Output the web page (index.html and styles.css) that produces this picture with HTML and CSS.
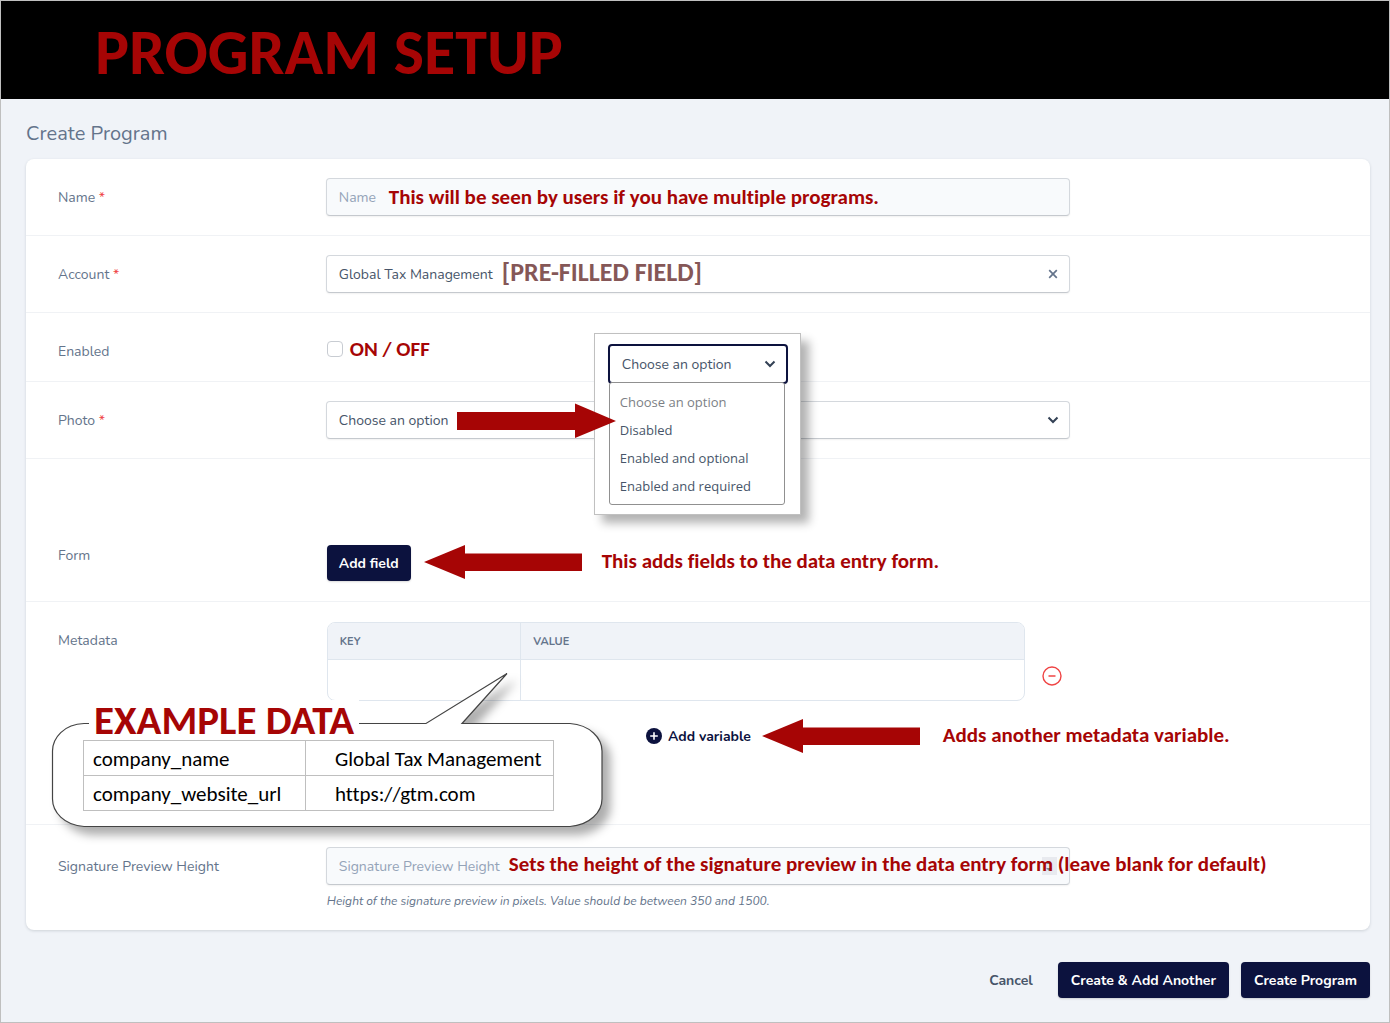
FILE: index.html
```html
<!DOCTYPE html>
<html lang="en">
<head>
<meta charset="utf-8">
<title>Program Setup</title>
<link rel="stylesheet" href="styles.css">
</head>
<body>
<div class="page">
  <header class="banner"><h1>PROGRAM SETUP</h1></header>
  <main class="content">
    <h2 class="title">Create Program</h2>
    <form>
      <div class="card">
        <div class="row">
          <label class="label" for="name">Name <span class="req">*</span></label>
          <div class="field">
            <input class="control filled" id="name" type="text" placeholder="Name">
            <p class="note note-name">This will be seen by users if you have multiple programs.</p>
          </div>
        </div>
        <div class="row">
          <label class="label" for="account">Account <span class="req">*</span></label>
          <div class="field">
            <input class="control" id="account" type="text" value="Global Tax Management">
            <button class="clear" type="button" aria-label="Clear account">
              <svg width="10" height="10" viewBox="0 0 10 10"><path d="M1.200 1.200l7.600 7.600M8.800 1.200l-7.600 7.600" fill="none" stroke="#64748b" stroke-width="1.700"/></svg>
            </button>
            <p class="note prefilled">[PRE-FILLED FIELD]</p>
          </div>
        </div>
        <div class="row">
          <label class="label" for="enabled">Enabled</label>
          <div class="field check-field">
            <input class="check" id="enabled" type="checkbox">
            <span class="note">ON / OFF</span>
          </div>
        </div>
        <div class="row">
          <label class="label" for="photo">Photo <span class="req">*</span></label>
          <div class="field">
            <select class="control" id="photo"><option>Choose an option</option></select>
            <svg class="chevron" width="12" height="8" viewBox="0 0 12 8"><path d="M1.500 1.500L6 6l4.500-4.500" fill="none" stroke="#334155" stroke-width="2"/></svg>
            <div class="popup">
              <div class="popup-select">
                <select class="control focused" aria-label="Photo options"><option>Choose an option</option></select>
                <svg class="chevron" width="12" height="8" viewBox="0 0 12 8"><path d="M1.500 1.500L6 6l4.500-4.500" fill="none" stroke="#334155" stroke-width="2"/></svg>
              </div>
              <ul class="options">
                <li class="muted">Choose an option</li>
                <li>Disabled</li>
                <li>Enabled and optional</li>
                <li>Enabled and required</li>
              </ul>
            </div>
            <svg class="arrow-photo" width="160" height="36" viewBox="0 0 160 36"><path d="M0 9h118V0.500L159 18l-41 17v-8H0z" fill="#a60505"/></svg>
          </div>
        </div>
        <div class="row row-form">
          <span class="label label-top">Form</span>
          <div class="field inline-field">
            <button class="btn btn-field" type="button">Add field</button>
            <div class="pointer">
              <svg class="arrow-left" width="160" height="34" viewBox="0 1 160 34"><path d="M159 9.500H42V1L1 18l41 17v-8h117z" fill="#a60505"/></svg>
              <p class="note">This adds fields to the data entry form.</p>
            </div>
          </div>
        </div>
        <div class="row row-meta">
          <span class="label label-top">Metadata</span>
          <div class="field">
            <div class="kv">
              <div class="kv-box">
                <table class="kv-table">
                  <thead><tr><th class="key">KEY</th><th>VALUE</th></tr></thead>
                  <tbody><tr>
                    <td><input class="cell" type="text" aria-label="Key"></td>
                    <td><input class="cell" type="text" aria-label="Value"></td>
                  </tr></tbody>
                </table>
              </div>
              <button class="remove" type="button" aria-label="Remove row">
                <svg width="20" height="20" viewBox="0 0 20 20"><circle cx="10" cy="10" r="9" fill="none" stroke="#ef4444" stroke-width="1.400"/><path d="M6.500 10h7" stroke="#ef4444" stroke-width="1.500"/></svg>
              </button>
            </div>
            <div class="add-line">
              <button class="add" type="button">
                <svg width="16" height="16" viewBox="0 0 16 16"><circle cx="8" cy="8" r="8" fill="#0c123e"/><path d="M8 4.200v7.600M4.200 8h7.600" stroke="#fff" stroke-width="1.600"/></svg>
                <span class="add-text">Add variable</span>
              </button>
              <div class="add-note pointer">
                <svg class="arrow-left" width="160" height="34" viewBox="0 1 160 34"><path d="M159 9.500H42V1L1 18l41 17v-8h117z" fill="#a60505"/></svg>
                <p class="note">Adds another metadata variable.</p>
              </div>
            </div>
          </div>
          <div class="callout">
            <svg class="bubble" width="580" height="190" viewBox="0 0 580 190">
              <path d="M50 58.500H386L467 8.500L422 58.500H530C550 60 562 73 562 86V134C562 147 550 160 530 161.500H44C24 160 12.500 147 12.500 134V86C12.500 73 24 59 44 58.500Z" fill="#fff" stroke="#444" stroke-width="1.200"/>
            </svg>
            <div class="callout-body">
              <h3 class="callout-title">EXAMPLE DATA</h3>
              <table class="example">
                <tr><td>company_name</td><td>Global Tax Management</td></tr>
                <tr><td>company_website_url</td><td>https://gtm.com</td></tr>
              </table>
            </div>
          </div>
        </div>
        <div class="row row-sig">
          <label class="label" for="sig">Signature Preview Height</label>
          <div class="field">
            <input class="control filled" id="sig" type="text" inputmode="numeric" placeholder="Signature Preview Height">
            <span class="spinner">
              <svg width="8" height="12" viewBox="0 0 8 12"><path d="M1 4l3-3 3 3zM1 8l3 3 3-3z" fill="#7c8494"/></svg>
            </span>
            <p class="note note-sig">Sets the height of the signature preview in the data entry form (leave blank for default)</p>
            <p class="help">Height of the signature preview in pixels. Value should be between 350 and 1500.</p>
          </div>
        </div>
      </div>
      <div class="actions">
        <a class="cancel" href="#">Cancel</a>
        <button class="btn" type="button">Create &amp; Add Another</button>
        <button class="btn" type="submit">Create Program</button>
      </div>
    </form>
  </main>
</div>
</body>
</html>
```
FILE: styles.css
```css
* { box-sizing: border-box; }
body {
  margin: 0;
  background: #f0f3f8;
  color: #64748b;
  font: 14px/20px Nunito, "Open Sans", "Noto Sans", sans-serif;
}
h1, h2, h3, p, ul { margin: 0; padding: 0; }
button, input, select { font: inherit; }
button { cursor: pointer; }
svg { display: block; }

.page { border: 1px solid #bfbfbf; min-height: 100vh; }
.banner {
  background: #000;
  height: 98px;
  padding: 14px 94px;
  color: #a60505;
  font-family: Carlito, Lato, sans-serif;
}
.banner h1 { font-size: 64px; line-height: 74px; font-weight: 700; white-space: nowrap; }
.content { padding: 23px 19px 24px 25px; }
.title { font-size: 20px; line-height: 24px; font-weight: 400; margin-bottom: 13px; }

.card {
  background: #fff;
  border-radius: 8px;
  box-shadow: 0 1px 3px rgba(30, 41, 59, .16);
}
.row {
  display: flex;
  position: relative;
  padding: 19px 0;
  border-bottom: 1px solid #f0f2f5;
}
.row:last-child { border-bottom: 0; }
.label { width: 20%; padding: 10px 0 8px 32px; flex: none; white-space: nowrap; }
.req { color: #ef4444; }
.field { position: relative; width: 60%; padding: 0 31px; }

.control {
  appearance: none;
  display: block;
  width: 100%;
  height: 38px;
  padding: 0 12px;
  border: 1px solid #d4d8dd;
  border-bottom-color: #c5c9ce;
  border-radius: 4px;
  background: #fff;
  color: #475569;
  box-shadow: 0 1px 2px rgba(0, 0, 0, .06);
}
select.control { padding-top: 2px; }
.control.filled { background: #f8fafc; }
.control::placeholder { color: #94a3b8; opacity: 1; }
.chevron { position: absolute; right: 42px; top: 15px; pointer-events: none; }
.clear { position: absolute; right: 43px; top: 14px; padding: 0; border: 0; background: none; }

.note {
  color: #a60505;
  font: 700 21px/24px Carlito, Lato, sans-serif;
  font-variant-ligatures: none;
  white-space: nowrap;
}
.note-name { position: absolute; left: 94px; top: 7px; }
.prefilled { position: absolute; left: 207px; top: 3px; font-size: 26px; line-height: 28px; color: #855757; }
.check-field { display: flex; align-items: center; gap: 7px; height: 34px; padding-left: 32px; }
.row:has(.check-field) { padding-bottom: 15px; }
.row:has(.check-field) .label { padding-bottom: 4px; }
.check {
  appearance: none;
  width: 16px;
  height: 16px;
  margin: 0;
  border: 1px solid #c8ccd2;
  border-radius: 4px;
  background: #fff;
}

.popup {
  position: absolute;
  z-index: 2;
  left: 299px;
  top: -68px;
  width: 207px;
  height: 182px;
  padding: 10px 12px 10px 13px;
  border: 1px solid #c0c0c0;
  background: #fff;
  box-shadow: 8px 8px 9px rgba(0, 0, 0, .3);
}
.popup-select { position: relative; }
.popup-select .chevron { right: 12px; top: 16px; }
.control.focused { border: 2px solid #0c123e; height: 40px; }
.options {
  position: relative;
  list-style: none;
  width: 176px;
  margin: -2px 0 0 1px;
  padding: 5px 10px 4px;
  border: 1px solid #909090;
  border-radius: 3px;
  background: #fff;
  color: #475569;
  font: 13px/28px "Open Sans", "Noto Sans", sans-serif;
}
.options li { white-space: nowrap; }
.options .muted { color: #7c7f85; }
.arrow-photo { position: absolute; z-index: 3; left: 162px; top: 2px; }
.arrow-left { flex: none; }

.row-form { padding-top: 86px; padding-bottom: 20px; }
.label-top { padding-top: 1px; padding-bottom: 0; }
.inline-field { display: flex; align-items: flex-start; gap: 12px; padding-left: 32px; }
.pointer { display: flex; align-items: center; gap: 19px; }
.pointer .note { padding-bottom: 2px; }
.btn {
  height: 36px;
  padding: 2px 13px 0;
  border: 0;
  border-radius: 4px;
  background: #0c123e;
  color: #fff;
  font-weight: 700;
  white-space: nowrap;
  box-shadow: 0 1px 2px rgba(0, 0, 0, .15);
}
.btn-field { padding: 2px 12px 0; }

.row-meta { padding: 20px 0 69px; }
.row-meta .label-top { padding-top: 9px; }
.kv { display: flex; align-items: flex-end; gap: 17px; padding-left: 1px; }
.kv-box { flex: 1; border: 1px solid #dfe6ee; border-radius: 8px; overflow: hidden; }
.kv-table { width: 100%; border-collapse: collapse; table-layout: fixed; }
.kv-table th {
  height: 36px;
  padding: 2px 12px 0;
  background: #f0f3f8;
  text-align: left;
  font-size: 11px;
  line-height: 16px;
}
.kv-table .key { width: 193px; }
.kv-table th + th, .kv-table td + td { border-left: 1px solid #dfe6ee; }
.kv-table td { height: 41px; padding: 0; border-top: 1px solid #dfe6ee; }
.cell { display: block; width: 100%; height: 40px; border: 0; padding: 0 12px; background: none; }
.remove { margin: 0 8px 15px 0; padding: 0; border: 0; background: none; }
.add-line { display: flex; justify-content: center; position: relative; padding: 16px 0 0 1px; }
.add {
  display: flex;
  align-items: center;
  gap: 6px;
  height: 38px;
  padding: 0;
  border: 0;
  background: none;
  color: #0c123e;
  font-weight: 700;
  white-space: nowrap;
}
.add-text { padding-top: 2px; }
.add-note { position: absolute; left: 435px; top: 18px; gap: 22px; }

.callout { position: absolute; z-index: 2; left: 14px; top: 63px; width: 580px; height: 190px; }
.bubble { position: absolute; left: 0; top: 0; filter: drop-shadow(8px 8px 5px rgba(0, 0, 0, .32)); }
.callout-body { position: relative; padding: 35px 48px 0 43px; }
.callout-title {
  width: max-content;
  padding: 0 5px;
  margin-left: 6px;
  background: #fff;
  color: #a60505;
  font: 700 41px/40px Carlito, Lato, sans-serif;
  white-space: nowrap;
}
.example {
  width: 471px;
  border-collapse: collapse;
  color: #000;
  font: 21px/24px Carlito, Lato, sans-serif;
  font-variant-ligatures: none;
}
.example td { height: 35px; padding: 1px 9px 0; border: 1px solid #bfbfbf; white-space: nowrap; }
.example td:first-child { width: 222px; }
.example td + td { padding-left: 29px; }

.row-sig { padding: 22px 0 19px; }
.spinner { position: absolute; right: 44px; top: 10px; width: 15px; height: 18px; padding: 3px; background: #e8eaef; }
.note-sig { position: absolute; left: 214px; top: 5px; }
.help { margin-top: 6px; padding-left: 1px; font-size: 12px; font-style: italic; }

.actions { display: flex; justify-content: flex-end; align-items: center; gap: 12px; margin-top: 32px; }
.cancel { margin-right: 13px; padding-top: 2px; color: #475569; font-weight: 700; text-decoration: none; }
```
